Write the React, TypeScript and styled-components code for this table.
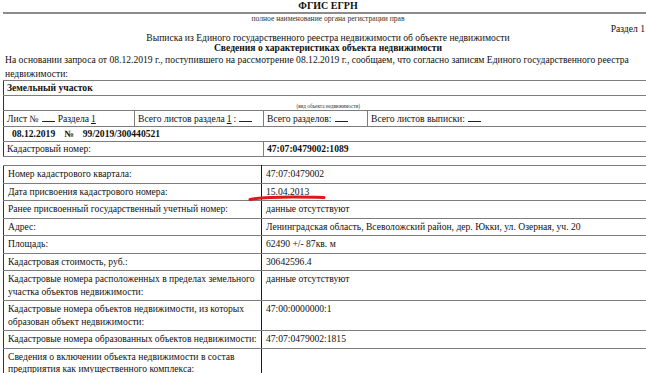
import React from "react";
import styled, { createGlobalStyle } from "styled-components";

const GlobalStyle = createGlobalStyle`
  html, body {
    margin: 0;
    padding: 0;
    background: #ffffff;
    overflow: hidden;
  }
  body {
    font-family: "Liberation Serif", "Times New Roman", serif;
    color: #111;
  }
`;

const Page = styled.div`
  width: 650px;
  padding: 0 0 0 3px;
  font-size: 9.6px;
  line-height: 12.5px;
`;

const Title = styled.div`
  text-align: center;
  font-weight: bold;
  font-size: 10px;
  line-height: 12px;
  height: 12px;
`;

const OrganRule = styled.div`
  border-top: 2px solid #8c8c8c;
  margin: 0 4px 0 0;
`;

const Caption = styled.div<{ $size: number }>`
  text-align: center;
  font-size: ${({ $size }) => $size}px;
  line-height: 10px;
  color: #333;
`;

const SectionLabel = styled.div`
  text-align: right;
  padding-right: 8px;
  line-height: 9px;
`;

const Heading = styled.div<{ $bold?: boolean }>`
  text-align: center;
  font-weight: ${({ $bold }) => ($bold ? "bold" : "normal")};
  line-height: 10px;
`;

const Intro = styled.p`
  margin: 0 0 0 2px;
  padding-right: 20px;
  line-height: 14px;
`;

const Table = styled.table<{ $gap: number }>`
  width: 100%;
  border-collapse: collapse;
  table-layout: fixed;
  margin-top: ${({ $gap }) => $gap}px;
  border-left: 1px solid #333;
`;

const Cell = styled.td<{ $bold?: boolean; $tight?: boolean; $divider?: boolean }>`
  border-top: 1px solid #7d7d7d;
  border-bottom: 1px solid #7d7d7d;
  border-right: ${({ $divider }) => ($divider ? "1px solid #1a1a1a" : "1px solid #7d7d7d")};
  padding: ${({ $tight }) => ($tight ? "1px 3px 1px" : "2px 4px 2px")};
  vertical-align: top;
  font-weight: ${({ $bold }) => ($bold ? "bold" : "normal")};
  line-height: ${({ $tight }) => ($tight ? 12 : 12.5)}px;
  white-space: nowrap;
`;

const WrapCell = styled(Cell)`
  white-space: normal;
`;

const TinyCell = styled.td`
  border-top: 1px solid #7d7d7d;
  border-bottom: 1px solid #7d7d7d;
  text-align: center;
  vertical-align: bottom;
  font-size: 5.2px;
  line-height: 7px;
  height: 14px;
  padding: 0;
  color: #333;
`;

const Blank = styled.span`
  display: inline-block;
  width: 13px;
  border-bottom: 1px solid #222;
  height: 9px;
  vertical-align: baseline;
  margin: 0 3px;
`;

const Under = styled.span`
  text-decoration: underline;
  margin: 0 2px;
`;

const Number = styled.span`
  margin-left: 9px;
  font-weight: bold;

  &:first-child {
    margin-left: 5px;
  }
`;

const Mark = styled.span`
  position: relative;
`;

const RedStroke = styled.svg`
  position: absolute;
  left: -18px;
  top: 9px;
  width: 80px;
  height: 6px;
  overflow: visible;
`;

const details: [string, string][] = [
  ["Ранее присвоенный государственный учетный номер:", "данные отсутствуют"],
  ["Адрес:", "Ленинградская область, Всеволожский район, дер. Юкки, ул. Озерная, уч. 20"],
  ["Площадь:", "62490 +/- 87кв. м"],
  ["Кадастровая стоимость, руб.:", "30642596.4"],
  [
    "Кадастровые номера расположенных в пределах земельного участка объектов недвижимости:",
    "данные отсутствуют",
  ],
  [
    "Кадастровые номера объектов недвижимости, из которых образован объект недвижимости:",
    "47:00:0000000:1",
  ],
  ["Кадастровые номера образованных объектов недвижимости:", "47:07:0479002:1815"],
  [
    "Сведения о включении объекта недвижимости в состав предприятия как имущественного комплекса:",
    "",
  ],
];

export default function App() {
  return (
    <>
      <GlobalStyle />
      <Page>
        <Title>ФГИС ЕГРН</Title>
        <OrganRule />
        <Caption $size={7.6}>полное наименование органа регистрации прав</Caption>
        <SectionLabel>Раздел 1</SectionLabel>
        <Heading>Выписка из Единого государственного реестра недвижимости об объекте недвижимости</Heading>
        <Heading $bold>Сведения о характеристиках объекта недвижимости</Heading>
        <Intro>
          На основании запроса от 08.12.2019 г., поступившего на рассмотрение 08.12.2019 г., сообщаем, что согласно записям
          Единого государственного реестра недвижимости:
        </Intro>

        <Table $gap={-1}>
          <colgroup>
            <col style={{ width: 131 }} />
            <col style={{ width: 129 }} />
            <col style={{ width: 104 }} />
            <col />
          </colgroup>
          <tbody>
            <tr>
              <Cell colSpan={4} $bold $tight>
                Земельный участок
              </Cell>
            </tr>
            <tr>
              <TinyCell colSpan={4}>(вид объекта недвижимости)</TinyCell>
            </tr>
            <tr>
              <Cell $tight>
                Лист №<Blank />Раздела<Under>1</Under>
              </Cell>
              <Cell $tight>
                Всего листов раздела<Under>1</Under>:<Blank />
              </Cell>
              <Cell $tight>
                Всего разделов:<Blank />
              </Cell>
              <Cell $tight>
                Всего листов выписки:<Blank />
              </Cell>
            </tr>
            <tr>
              <Cell colSpan={4} $tight>
                <Number>08.12.2019</Number>
                <Number>№</Number>
                <Number>99/2019/300440521</Number>
              </Cell>
            </tr>
            <tr>
              <Cell colSpan={2} $tight>
                Кадастровый номер:
              </Cell>
              <Cell colSpan={2} $bold $tight>
                47:07:0479002:1089
              </Cell>
            </tr>
          </tbody>
        </Table>

        <Table $gap={8}>
          <colgroup>
            <col style={{ width: 258 }} />
            <col />
          </colgroup>
          <tbody>
            <tr>
              <Cell $divider>Номер кадастрового квартала:</Cell>
              <Cell>47:07:0479002</Cell>
            </tr>
            <tr>
              <Cell $divider>Дата присвоения кадастрового номера:</Cell>
              <Cell>
                <Mark>
                  15.04.2013
                  <RedStroke viewBox="0 0 80 6">
                    <path
                      d="M2 4.5 C 14 2.2, 40 1.6, 76 2.6"
                      stroke="#e01818"
                      strokeWidth="3"
                      strokeLinecap="round"
                      fill="none"
                    />
                  </RedStroke>
                </Mark>
              </Cell>
            </tr>
            {details.map(([label, value]) => (
              <tr key={label}>
                <WrapCell $divider>{label}</WrapCell>
                <Cell>{value}</Cell>
              </tr>
            ))}
          </tbody>
        </Table>
      </Page>
    </>
  );
}
